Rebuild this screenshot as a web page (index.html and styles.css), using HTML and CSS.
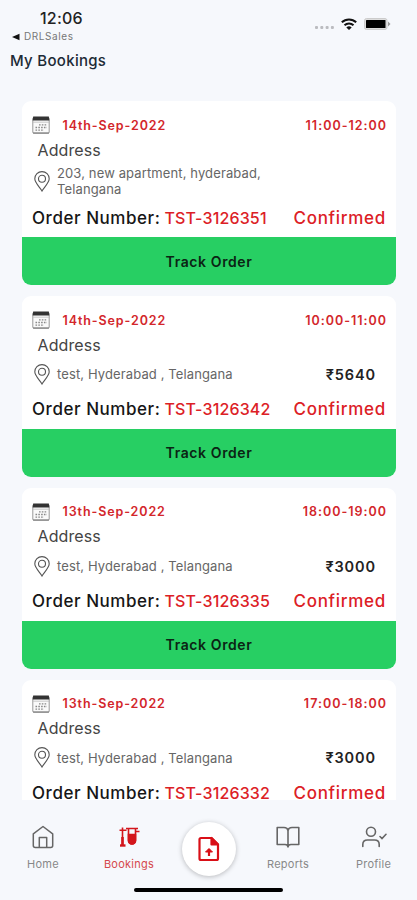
FILE: index.html
```html
<!DOCTYPE html>
<html lang="en">
<head>
<meta charset="utf-8">
<title>My Bookings</title>
<link rel="stylesheet" href="styles.css">
</head>
<body>
<svg width="0" height="0" class="defs">
  <symbol id="calendar" viewBox="0 0 18 18">
    <rect x=".8" y="1.5" width="16.4" height="15.700" rx="1" fill="#fafafa" stroke="#999" stroke-width="1"/>
    <path d="M1.200 .5H16.800L17.300 4.500H.7Z" fill="#333"/>
    <path d="M1 6.200H17" stroke="#bbb" stroke-width=".8"/>
    <path d="M7 8.800H15M3.500 11.500H15M3.500 14.200H12" stroke="#888" stroke-width="1.300" stroke-dasharray="1.600 1.200"/>
    <path d="M1 17H17" stroke="#777" stroke-width="1"/>
  </symbol>
  <symbol id="pin" viewBox="0 0 16 21">
    <path d="M8 20C6.500 17 .8 12 .8 7.800a7.200 7.200 0 0 1 14.400 0C15.200 12 9.500 17 8 20Z" fill="none" stroke="#555" stroke-width="1.100"/>
    <circle cx="8" cy="7.800" r="3.500" fill="none" stroke="#555" stroke-width="1.100"/>
  </symbol>
</svg>
<div class="screen">
  <header class="status">
    <div class="clock"><div class="time">12:06</div><div class="back"><svg width="8" height="8" viewBox="0 0 8 8"><path d="M0 4 7.500 .8V7.200Z" fill="#111"/></svg><span>DRLSales</span></div></div>
    <div class="signals">
      <svg class="dots" width="20" height="4" viewBox="0 0 20 4"><g fill="#bbbcc0"><rect width="3" height="3" x="0" rx="1"/><rect width="3" height="3" x="5.300" rx="1"/><rect width="3" height="3" x="10.600" rx="1"/><rect width="3" height="3" x="15.900" rx="1"/></g></svg>
      <svg class="wifi" width="16" height="12" viewBox="0 0 16 12"><g fill="none" stroke="#111" stroke-width="2"><path d="M.8 4.300A10.500 10.500 0 0 1 15.200 4.300"/><path d="M3.500 7.300A6.500 6.500 0 0 1 12.500 7.300"/></g><path d="M8 12 5.300 9.400Q8 7.300 10.700 9.400Z" fill="#111"/></svg>
      <svg width="27" height="12" viewBox="0 0 27 12"><rect x=".5" y=".5" width="22.500" height="11" rx="2" fill="#ddd" stroke="#ccc"/><rect x="2" y="2" width="19.500" height="8" rx=".5" fill="#000"/><path d="M24 3.500 26.500 6 24 8.500Z" fill="#999"/></svg>
    </div>
  </header>
  <h1>My Bookings</h1>
  <main>
    <article class="card tall">
      <div class="when"><svg width="18" height="18"><use href="#calendar"/></svg><span class="date">14th-Sep-2022</span><span class="slot">11:00-12:00</span></div>
      <div class="label">Address</div>
      <div class="place"><svg width="16" height="21"><use href="#pin"/></svg><span class="addr two">203, new apartment, hyderabad,<br>Telangana</span></div>
      <div class="order"><span class="num">Order Number:</span><span class="id">TST-3126351</span><span class="state">Confirmed</span></div>
      <button>Track Order</button>
    </article>
    <article class="card">
      <div class="when"><svg width="18" height="18"><use href="#calendar"/></svg><span class="date">14th-Sep-2022</span><span class="slot">10:00-11:00</span></div>
      <div class="label">Address</div>
      <div class="place"><svg width="16" height="21"><use href="#pin"/></svg><span class="addr">test, Hyderabad , Telangana</span><span class="price">₹5640</span></div>
      <div class="order"><span class="num">Order Number:</span><span class="id">TST-3126342</span><span class="state">Confirmed</span></div>
      <button>Track Order</button>
    </article>
    <article class="card">
      <div class="when"><svg width="18" height="18"><use href="#calendar"/></svg><span class="date">13th-Sep-2022</span><span class="slot">18:00-19:00</span></div>
      <div class="label">Address</div>
      <div class="place"><svg width="16" height="21"><use href="#pin"/></svg><span class="addr">test, Hyderabad , Telangana</span><span class="price">₹3000</span></div>
      <div class="order"><span class="num">Order Number:</span><span class="id">TST-3126335</span><span class="state">Confirmed</span></div>
      <button>Track Order</button>
    </article>
    <article class="card">
      <div class="when"><svg width="18" height="18"><use href="#calendar"/></svg><span class="date">13th-Sep-2022</span><span class="slot">17:00-18:00</span></div>
      <div class="label">Address</div>
      <div class="place"><svg width="16" height="21"><use href="#pin"/></svg><span class="addr">test, Hyderabad , Telangana</span><span class="price">₹3000</span></div>
      <div class="order"><span class="num">Order Number:</span><span class="id">TST-3126332</span><span class="state">Confirmed</span></div>
    </article>
  </main>
  <nav>
    <a class="tab"><svg width="24" height="24" viewBox="0 0 24 24" fill="none" stroke="#666" stroke-width="1.500" stroke-linejoin="round"><path d="M2.300 8.800 12 1.500 21.700 8.800V20.500a2 2 0 0 1-2 2H4.300a2 2 0 0 1-2-2Z"/><path d="M8.300 22.500V12.500H15.700V22.500"/></svg><span>Home</span></a>
    <a class="tab on"><svg width="24" height="24" viewBox="0 0 24 24" fill="none" stroke="#d3161c" stroke-width="1.600"><path d="M5.500 2.500V20M2.500 5.200H9.500M9 3.500H21M18.500 6.500H22.500"/><path d="M3 20.500H8.500" stroke-width="2.400"/><path d="M5.500 12V20" stroke-width="2.600"/><path d="M11.500 3.500V15.500a3.500 3.500 0 0 0 7 0V3.500"/><path d="M11.500 9.500H18.500V15.500a3.500 3.500 0 0 1-7 0Z" fill="#d3161c"/></svg><span>Bookings</span></a>
    <a class="upload"><svg width="24" height="26" viewBox="0 0 24 26" fill="none" stroke="#d90f17" stroke-width="2.200" stroke-linejoin="round"><path d="M4 2H14.500L21 8.500V22.500a1.500 1.500 0 0 1-1.500 1.500H4a1.500 1.500 0 0 1-1.500-1.500V3.500A1.500 1.500 0 0 1 4 2Z"/><path d="M14.500 2V8.500H21Z" fill="#d90f17"/><path d="M12 20V13"/><path d="M8.500 16 12 12.500 15.500 16Z" fill="#d90f17" stroke-width="1"/></svg></a>
    <a class="tab"><svg width="24" height="24" viewBox="0 0 24 24" fill="none" stroke="#666" stroke-width="1.600" stroke-linejoin="round"><path d="M12 5.500Q11.500 2.500 8 2.500H1.200V19.500H9Q12 19.500 12 22 12 19.500 15 19.500H22.800V2.500H16Q12.500 2.500 12 5.500V22"/></svg><span>Reports</span></a>
    <a class="tab"><svg width="26" height="24" viewBox="0 0 26 24" fill="none" stroke="#666" stroke-width="1.600" stroke-linecap="round"><circle cx="10" cy="6.800" r="4.500"/><path d="M1.800 21.500V19.500Q1.800 15 6.500 15H13.500Q18.200 15 18.200 19.500V21.500M19 11.500 21 13.500 25 9.300"/></svg><span>Profile</span></a>
  </nav>
  <div class="homebar"></div>
</div>
</body>
</html>
```
FILE: styles.css
```css
* { box-sizing: border-box; }
body { margin: 0; background: #f6f8fc; font-family: Inter, Roboto, sans-serif; }
.defs { display: block; }
.screen { width: 417px; height: 900px; overflow: hidden; display: flex; flex-direction: column; white-space: nowrap; }
.status { height: 46px; flex: none; display: flex; justify-content: space-between; padding: 8px 26px 0 12px; }
.time { font-size: 16px; line-height: 20px; font-weight: 500; padding-left: 28px; color: #222; letter-spacing: .2px; }
.back { display: flex; align-items: center; gap: 4px; font-size: 10px; line-height: 17px; letter-spacing: .6px; color: #777; }
.signals { display: flex; align-items: center; height: 32px; }
.dots { margin: 8px 6px 0 0; }
.wifi { margin-right: 7px; }
h1 { margin: 0; flex: none; height: 55px; padding-left: 10px; font-size: 15px; line-height: 29px; font-weight: 500; letter-spacing: .3px; color: #1d2b36; }
main { flex: none; height: 699px; overflow: hidden; padding: 0 21px 0 22px; display: flex; flex-direction: column; gap: 11px; }
.card { flex: none; height: 180.8px; background: #fff; border-radius: 9px; overflow: hidden; display: flex; flex-direction: column; padding-top: 13.5px; }
.card.tall { height: 184px; }
.when { display: flex; align-items: center; height: 21px; padding: 0 10px 0 10px; font-size: 12.5px; font-weight: 600; color: #d3262b; }
.date { margin-left: 12.5px; letter-spacing: .9px; }
.slot { margin-left: auto; letter-spacing: 1px; margin-right: -1px; }
.label { height: 28px; line-height: 28px; padding-left: 15.5px; font-size: 16px; letter-spacing: .1px; color: #444; }
.place { height: 31.500px; display: flex; align-items: center; padding: 0 20px 0 12px; color: #666; }
.tall .place { height: 35px; }
.addr { margin-left: 7px; font-size: 13px; line-height: 16px; letter-spacing: .12px; }
.price { margin-left: auto; font-size: 14.5px; font-weight: 600; letter-spacing: .9px; color: #222; }
.order { flex: 1; display: flex; align-items: baseline; padding: 8px 10px 0 10px; font-size: 17px; line-height: 23px; font-weight: 500; color: #161616; }
.num { letter-spacing: .55px; }
.id { margin-left: 4px; font-size: 16px; letter-spacing: .15px; color: #dc2025; }
.state { margin-left: auto; letter-spacing: .7px; color: #dc2025; }
button { flex: none; height: 48px; border: 0; padding: 0; background: #27cf63; font: 600 14px Inter, sans-serif; letter-spacing: .6px; color: #0b2414; }
nav { flex: none; height: 86px; display: grid; grid-template-columns: 86px 86px 74px 84px 87px; align-items: start; padding-top: 22px; }
.tab { display: flex; flex-direction: column; align-items: center; font-size: 11px; line-height: 14px; gap: 8px; padding-top: 3px; letter-spacing: .25px; color: #888; }
.tab.on { color: #d5484d; }
.upload { width: 54px; height: 54px; border-radius: 50%; background: #fff; box-shadow: 0 1px 5px rgba(0,0,0,.25); display: grid; place-items: center; justify-self: center; }
.homebar { flex: none; width: 149px; height: 4px; margin: 2px 0 0 134px; border-radius: 2px; background: #000; }
```
